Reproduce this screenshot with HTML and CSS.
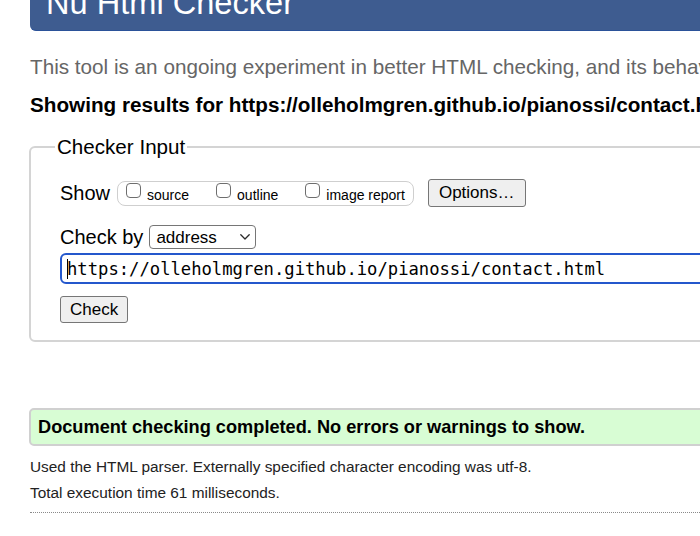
FILE: index.html
```html
<!DOCTYPE html>
<html lang="en">
<head>
<meta charset="utf-8">
<title>Nu Html Checker</title>
<link rel="stylesheet" href="styles.css">
</head>
<body>
<div class="page">
  <h1 class="title">Nu Html Checker</h1>
  <p class="intro">This tool is an ongoing experiment in better HTML checking, and its behavior remains subject to change</p>
  <p class="results-for">Showing results for https://olleholmgren.github.io/pianossi/contact.html</p>
  <form class="checker">
    <fieldset class="checker-set">
      <legend class="checker-legend">Checker Input</legend>
      <div class="checker-body">
        <div class="row row-show">
          <span class="lbl lbl-show">Show</span>
          <span class="group">
            <label class="opt"><input type="checkbox" class="cb"><span class="opt-text">source</span></label>
            <label class="opt"><input type="checkbox" class="cb"><span class="opt-text">outline</span></label>
            <label class="opt"><input type="checkbox" class="cb"><span class="opt-text">image report</span></label>
          </span>
          <button type="button" class="btn btn-options">Options…</button>
        </div>
        <div class="row row-by">
          <span class="lbl lbl-by">Check by</span>
          <span class="select-wrap">
            <select class="sel"><option>address</option></select>
            <svg class="chev" width="10" height="6" viewBox="0 0 10 6"><path d="M0.8 0.8 L5 5 L9.2 0.8" fill="none" stroke="#2a2a2a" stroke-width="1.3" stroke-linecap="round" stroke-linejoin="round"/></svg>
          </span>
        </div>
        <div class="url-wrap">
          <input class="url" type="url" value="https://olleholmgren.github.io/pianossi/contact.html">
          <span class="caret"></span>
        </div>
        <div class="row row-check">
          <button type="button" class="btn btn-check">Check</button>
        </div>
      </div>
    </fieldset>
  </form>
  <p class="success">Document checking completed. No errors or warnings to show.</p>
  <p class="meta">Used the HTML parser. Externally specified character encoding was utf-8.</p>
  <p class="meta meta-last">Total execution time 61 milliseconds.</p>
</div>
</body>
</html>
```
FILE: styles.css
```css
html, body {
  margin: 0;
  padding: 0;
  background: #fff;
  overflow: hidden;
}
body {
  font-family: "Liberation Sans", Arial, sans-serif;
  color: #000;
}
.page {
  padding-left: 30px;
  width: 800px;
}
.title {
  margin: -17px 0 0;
  padding: 0 16px 7px;
  font-size: 32.6px;
  line-height: 40px;
  font-weight: normal;
  color: #fff;
  background: #3e5c90;
  border-bottom: 1px solid #2b5299;
  border-bottom-left-radius: 6px;
  white-space: nowrap;
}
.intro {
  margin: 24px 0 0;
  font-size: 20.7px;
  line-height: 24px;
  color: #666;
  white-space: nowrap;
}
.results-for {
  margin: 14px 0 0;
  font-size: 20.7px;
  line-height: 24px;
  font-weight: bold;
  white-space: nowrap;
}
.checker {
  margin: 18px 0 0 -1px;
}
.checker-set {
  margin: 0;
  padding: 20px 0 17px 24px;
  border: 2px solid #d4d4d4;
  border-radius: 6px;
  min-width: 0;
}
.checker-legend {
  padding: 0 2px;
  font-size: 20.6px;
  line-height: 24px;
}
.checker-body {
  padding-left: 5px;
}
.row {
  display: flex;
  align-items: center;
}
.lbl {
  font-size: 20px;
  line-height: 24px;
}
.row-show {
  height: 28px;
}
.lbl-show {
  margin-right: 7px;
}
.group {
  display: inline-flex;
  align-items: flex-start;
  height: 23px;
  padding: 0 8px;
  border: 1px solid #cfcfcf;
  border-radius: 8px;
}
.opt {
  display: flex;
  align-items: flex-start;
}
.opt + .opt {
  margin-left: 27px;
}
.cb {
  -webkit-appearance: none;
  appearance: none;
  box-sizing: border-box;
  width: 15px;
  height: 15px;
  margin: 1px 6px 0 0;
  border: 1px solid #6e6e6e;
  border-radius: 4px;
  background: #fff;
}
.opt-text {
  margin-top: 5px;
  font-size: 14px;
  line-height: 16px;
  white-space: nowrap;
}
.btn {
  box-sizing: border-box;
  font-family: "Liberation Sans", Arial, sans-serif;
  font-size: 17px;
  color: #000;
  background: #efefef;
  border: 1px solid #767676;
  border-radius: 3px;
  line-height: 20px;
}
.btn-options {
  margin-left: 14px;
  height: 28px;
  padding: 0 10px;
}
.row-by {
  margin-top: 18px;
  height: 24px;
}
.lbl-by {
  margin-right: 6px;
}
.select-wrap {
  position: relative;
  display: inline-block;
  height: 24px;
}
.sel {
  -webkit-appearance: none;
  appearance: none;
  box-sizing: border-box;
  width: 107px;
  height: 24px;
  margin: 0;
  padding: 0 0 0 6px;
  font-family: "Liberation Sans", Arial, sans-serif;
  font-size: 17px;
  color: #000;
  background: #fff;
  border: 1px solid #767676;
  border-radius: 4px;
}
.chev {
  position: absolute;
  right: 6px;
  top: 9px;
}
.url-wrap {
  position: relative;
  margin-top: 4px;
}
.url {
  box-sizing: border-box;
  display: block;
  width: 700px;
  height: 31px;
  margin: 0;
  padding: 0 0 0 5px;
  font-family: "DejaVu Sans Mono", monospace;
  font-size: 17.2px;
  color: #000;
  background: #fff;
  border: 2px solid #2457cc;
  border-radius: 6px;
  outline: none;
}
.caret {
  position: absolute;
  left: 7px;
  top: 6px;
  width: 1px;
  height: 20px;
  background: #000;
}
.row-check {
  margin-top: 12px;
}
.btn-check {
  height: 27px;
  padding: 0 9px;
}
.success {
  margin: 66px 0 0 -1px;
  padding: 6px 7px;
  font-size: 18.2px;
  line-height: 22px;
  font-weight: bold;
  background: #d8fdd4;
  border: 2px solid #d0d0d0;
  border-radius: 5px;
  white-space: nowrap;
}
.meta {
  margin: 12px 0 0;
  font-size: 15.4px;
  line-height: 18px;
  color: #222;
}
.meta-last {
  margin-top: 8px;
  padding-bottom: 10px;
  border-bottom: 1px dotted #8a8a8a;
}
```
